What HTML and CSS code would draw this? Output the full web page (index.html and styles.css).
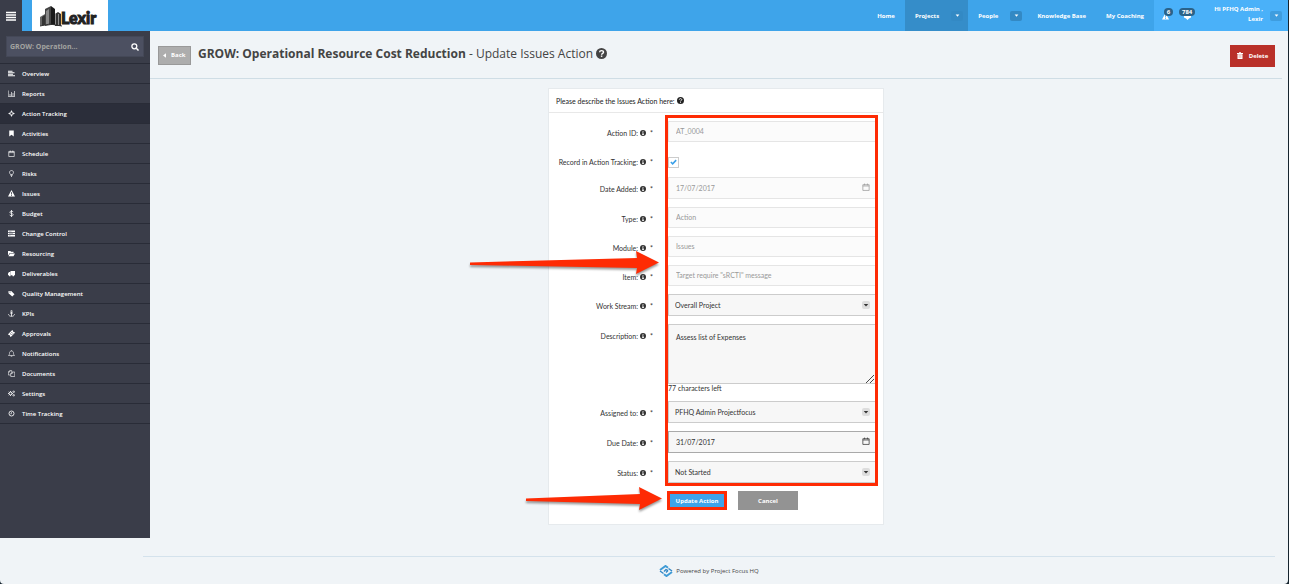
FILE: index.html
```html
<!DOCTYPE html>
<html lang="en">
<head>
<meta charset="utf-8">
<title>Update Issues Action</title>
<link rel="stylesheet" href="styles.css">
</head>
<body>
<svg class="defs" aria-hidden="true">
  <symbol id="info" viewBox="0 0 12 12"><circle cx="6" cy="6" r="6" fill="currentColor"/><path d="M5 2h2v1.7H5zM4.2 4.8H7v3.7h.9V10H4.2V8.500H5V6.200h-.8z" fill="#fff"/></symbol>
  <symbol id="help" viewBox="0 0 12 12"><circle cx="6" cy="6" r="6" fill="currentColor"/><path d="M3.900 4.600C4 3.200 5 2.800 6 2.800s2.200.6 2.200 1.800C8.200 6 6.100 5.900 6.100 7.400" fill="none" stroke="#fff" stroke-width="1.500"/><path d="M5.300 8.200h1.600v1.500H5.300z" fill="#fff"/></symbol>
  <symbol id="cal" viewBox="0 0 14 14"><path d="M1.500 3h11v10h-11zM1.500 5.200h11M4.500 1v3M9.500 1v3" fill="none" stroke="currentColor" stroke-width="1.300"/></symbol>
  <symbol id="caret" viewBox="0 0 8 8"><path d="M1 2.500h6L4 6z" fill="currentColor"/></symbol>
  <symbol id="warn" viewBox="0 0 14 14"><path fill="currentColor" fill-rule="evenodd" d="M7 0l7 13H0zM6 4.500l.3 4h1.400l.3-4zM6 9.500v2h2v-2z"/></symbol>
</svg>
<div class="page">
  <header class="topbar">
    <button class="menu" aria-label="Menu"><svg viewBox="0 0 10 10"><path d="M0 1.500h10M0 4h10M0 6.500h10M0 9h10" stroke="#fff" stroke-width="1.400"/></svg></button>
    <a class="logo" href="#" aria-label="Lexir">
      <svg class="towers" viewBox="0 0 22 21"><path d="M0 11l5-3v11l-5 1z" fill="#666"/><path d="M2 11l3-2v10l-3 .5z" fill="#333"/><path d="M5 3l6-3v19l-6 1z" fill="#444"/><path d="M6 5l3-2v16H6z" fill="#888"/><path d="M11 0l4 3v16h-4z" fill="#1a1a1a"/><path d="M15 8l3-2 3 2v12h-6z" fill="#333"/><path d="M15.500 8v11M18.500 8v11" stroke="#ccc" stroke-width=".6"/><path d="M0 20l10-2 12 2" stroke="#333" fill="none"/></svg>
      <span>Lexir</span>
    </a>
    <nav class="topnav">
      <a href="#">Home</a>
      <a class="current" href="#">Projects <span class="drop"><svg><use href="#caret"/></svg></span></a>
      <a href="#">People <span class="drop"><svg><use href="#caret"/></svg></span></a>
      <a href="#">Knowledge Base</a>
      <a href="#">My Coaching</a>
    </nav>
    <div class="account">
      <a class="alert" href="#" aria-label="Warnings"><svg><use href="#warn"/></svg><span class="badge">6</span></a>
      <a class="alert mail" href="#" aria-label="Messages"><svg viewBox="0 0 14 14"><path d="M0 2h14v7l-4 2-3 3-3-3-4-2z" fill="#fff"/></svg><span class="badge">784</span></a>
      <span class="user">Hi PFHQ Admin ,<br>Lexir</span>
      <button class="drop" aria-label="Account"><svg><use href="#caret"/></svg></button>
    </div>
  </header>
  <div class="body">
    <aside class="sidebar">
      <form class="search">
        <input type="text" placeholder="GROW: Operation..." aria-label="Search projects">
        <svg viewBox="0 0 12 12"><circle cx="5" cy="5" r="3.700" fill="none" stroke="#fff" stroke-width="1.900"/><path d="M8 8l3.300 3.300" stroke="#fff" stroke-width="2.200"/></svg>
      </form>
      <nav class="sidenav">
        <a href="#"><svg viewBox="0 0 14 14"><path d="M0 2.500h9M0 5.500h13M0 8.500h10M0 11.500h14" stroke="currentColor" stroke-width="2"/></svg>Overview</a>
        <a href="#"><svg viewBox="0 0 14 14"><path d="M.5 1v12H14M4 8v4M7 4v8M10 6v6M13 2v10" fill="none" stroke="currentColor" stroke-width="1.300"/></svg>Reports</a>
        <a class="current" href="#"><svg viewBox="0 0 14 14"><circle cx="7" cy="7" r="3.500" fill="none" stroke="currentColor" stroke-width="1.600"/><path d="M7 1v4M7 9v4M1 7h4M9 7h4" stroke="currentColor" stroke-width="1.800"/></svg>Action Tracking</a>
        <a href="#"><svg viewBox="0 0 14 14"><path d="M2.500 1h9v12L7 9.500 2.500 13z" fill="currentColor"/></svg>Activities</a>
        <a href="#"><svg><use href="#cal"/></svg>Schedule</a>
        <a href="#"><svg viewBox="0 0 14 14"><path d="M5 9C4.500 7.500 3 7 3 4.800 3 2.500 5 1 7 1s4 1.500 4 3.800C11 7 9.500 7.500 9 9zM5 11h4M6 13h2" fill="none" stroke="currentColor" stroke-width="1.400"/></svg>Risks</a>
        <a href="#"><svg><use href="#warn"/></svg>Issues</a>
        <a href="#"><svg viewBox="0 0 14 14"><path d="M10.500 4.200C10 3 8.800 2.500 7 2.500c-2 0-3.200.8-3.200 2.200 0 3 6.600 1.500 6.600 4.600 0 1.500-1.400 2.300-3.400 2.300s-3.200-.8-3.600-2M7 0v14" fill="none" stroke="currentColor" stroke-width="1.600"/></svg>Budget</a>
        <a href="#"><svg viewBox="0 0 14 14"><path d="M0 1h14v3H0zM0 5.500h14v3H0zM0 10h14v3H0z" fill="currentColor"/><path d="M2 2.500h5M2 7h8M2 11.500h3" stroke="#777b86"/></svg>Change Control</a>
        <a href="#"><svg viewBox="0 0 14 14"><path d="M0 11V2h5l1 1.500h5V6H3.500zM4 7h10l-3 5.500H1z" fill="currentColor"/></svg>Resourcing</a>
        <a href="#"><svg viewBox="0 0 14 14"><path d="M5 2h9v8.500H5zM0 10.500V7l2-3h2.500v6.500z" fill="currentColor"/><circle cx="3.500" cy="11" r="1.700" fill="currentColor"/><circle cx="10.500" cy="11" r="1.700" fill="currentColor"/></svg>Deliverables</a>
        <a href="#"><svg viewBox="0 0 14 14"><path d="M1 2h5.500l6.500 6.500L8.500 13 1 6.500zM3 3v2h2V3z" fill="currentColor" fill-rule="evenodd"/></svg>Quality Management</a>
        <a href="#"><svg viewBox="0 0 14 14"><circle cx="7" cy="2.300" r="1.500" fill="none" stroke="currentColor" stroke-width="1.400"/><path d="M7 4v8.500M4 6h6M1 8.500c.5 5.500 11.500 5.500 12 0" fill="none" stroke="currentColor" stroke-width="1.600"/></svg>KPIs</a>
        <a href="#"><svg viewBox="0 0 14 14"><path d="M0 8.500L8.500 0l1.500 1.500c0 1.500 1 2.500 2.500 2.500L14 5.500 5.500 14 4 12.500C4 11 3 10 1.500 10z" fill="currentColor"/><path d="M4.500 7.500l3-3 2.500 2.500-3 3z" fill="none" stroke="#3a3d49"/></svg>Approvals</a>
        <a href="#"><svg viewBox="0 0 14 14"><path d="M1 11c2-2 2-3 2-5.500C3 3.500 5 2 7 2s4 1.500 4 3.500C11 8 11 9 13 11zM7 .5V2M5.500 12.500h3" fill="none" stroke="currentColor" stroke-width="1.200"/></svg>Notifications</a>
        <a href="#"><svg viewBox="0 0 14 14"><path d="M5.500 10H.7V4L3.500 1.200h4V4M5.500 13V7l3-3h5v9zM8.500 4v3h-3M3.500 1.200V4H.7" fill="none" stroke="currentColor" stroke-width="1.200"/></svg>Documents</a>
        <a href="#"><svg viewBox="0 0 14 14"><circle cx="5" cy="7" r="2.900" fill="none" stroke="currentColor" stroke-width="2"/><path d="M5 2v2M5 10v2M0 7h2M8 7h2M1.500 3.500l1.400 1.400M8.500 10.500L7.100 9.100M1.500 10.500l1.400-1.400M8.500 3.500L7.100 4.900" stroke="currentColor" stroke-width="1.500"/><circle cx="11.500" cy="3.500" r="1.500" fill="none" stroke="currentColor" stroke-width="1.500"/><circle cx="11.500" cy="10.500" r="1.500" fill="none" stroke="currentColor" stroke-width="1.500"/></svg>Settings</a>
        <a href="#"><svg viewBox="0 0 14 14"><circle cx="7" cy="7" r="5" fill="none" stroke="currentColor" stroke-width="1.700"/><path d="M7 4v3.500H4.500" fill="none" stroke="currentColor" stroke-width="1.200"/></svg>Time Tracking</a>
      </nav>
    </aside>
    <main class="main">
      <div class="heading">
        <button class="back"><svg viewBox="0 0 4 6"><path d="M4 0v6L0 3z" fill="#fff"/></svg>Back</button>
        <h1><strong>GROW: Operational Resource Cost Reduction</strong> - Update Issues Action <svg><use href="#help"/></svg></h1>
        <button class="delete"><svg viewBox="0 0 12 14"><path d="M0 2h4V.5h4V2h4v1.800H0zM1 4.500h10V14H1z" fill="#fff"/><path d="M4 6v6M6 6v6M8 6v6" stroke="#b93029" stroke-width=".5"/></svg>Delete</button>
      </div>
      <section class="card">
        <h2>Please describe the Issues Action here: <svg><use href="#help"/></svg></h2>
        <form class="fields">
          <div class="row"><label for="aid">Action ID: <svg><use href="#info"/></svg><i>*</i></label><input class="field locked" id="aid" value="AT_0004" readonly></div>
          <div class="row check"><label for="rec">Record in Action Tracking: <svg><use href="#info"/></svg><i>*</i></label><div class="control"><input type="checkbox" id="rec" checked><svg class="tick" viewBox="0 0 10 8"><path d="M1.200 4l2.600 2.600L8.800 1.300" fill="none" stroke="#3a9fe8" stroke-width="2.200"/></svg></div></div>
          <div class="row"><label for="added">Date Added: <svg><use href="#info"/></svg><i>*</i></label><div class="control"><input class="field locked date" id="added" value="17/07/2017" readonly><svg class="day faded"><use href="#cal"/></svg></div></div>
          <div class="row"><label for="type">Type: <svg><use href="#info"/></svg><i>*</i></label><input class="field locked" id="type" value="Action" readonly></div>
          <div class="row"><label for="module">Module: <svg><use href="#info"/></svg><i>*</i></label><input class="field locked" id="module" value="Issues" readonly></div>
          <div class="row"><label for="item">Item: <svg><use href="#info"/></svg><i>*</i></label><input class="field locked" id="item" value="Target require &quot;sRCTI&quot; message" readonly></div>
          <div class="row"><label for="stream">Work Stream: <svg><use href="#info"/></svg><i>*</i></label><div class="control"><select class="field" id="stream"><option>Overall Project</option></select><span class="arrow"><svg><use href="#caret"/></svg></span></div></div>
          <div class="row"><label for="desc">Description: <svg><use href="#info"/></svg><i>*</i></label><div class="control"><textarea class="field" id="desc">Assess list of Expenses</textarea><svg class="grip" viewBox="0 0 8 8"><path d="M0 8L8 0M4 8l4-4" stroke="#333" stroke-width=".9"/></svg><p>77 characters left</p></div></div>
          <div class="row"><label for="who">Assigned to: <svg><use href="#info"/></svg><i>*</i></label><div class="control"><select class="field" id="who"><option>PFHQ Admin Projectfocus</option></select><span class="arrow"><svg><use href="#caret"/></svg></span></div></div>
          <div class="row"><label for="due">Due Date: <svg><use href="#info"/></svg><i>*</i></label><div class="control"><input class="field date due" id="due" value="31/07/2017"><svg class="day"><use href="#cal"/></svg></div></div>
          <div class="row"><label for="status">Status: <svg><use href="#info"/></svg><i>*</i></label><div class="control"><select class="field" id="status"><option>Not Started</option></select><span class="arrow"><svg><use href="#caret"/></svg></span></div></div>
          <div class="actions"><button type="button" class="update">Update Action</button><button type="button" class="cancel">Cancel</button></div>
          <div class="outline"></div>
          <svg class="pointer first" viewBox="0 0 190 24"><path d="M0 11.500L167 7 166 0l23 11.500L166 23l1-6L0 14z" fill="#fe2b04"/></svg>
          <svg class="pointer second" viewBox="0 0 136 24"><path d="M0 11.500L114 7 113 0l23 11.500L113 23l1-6L0 14z" fill="#fe2b04"/></svg>
        </form>
      </section>
    </main>
  </div>
  <footer class="footer">
    <svg viewBox="0 0 14 12"><path d="M1 5L6.500 1 9 2.800M13 7L7.500 11 5 9.200" fill="none" stroke="#3f9bd6" stroke-width="2"/><path d="M9.500 3.500L13 6M4.500 8.500L1 6M5 6.500L7 4.600l2 1M9 5.600L7 7.500" fill="none" stroke="#2f86c6" stroke-width="1.400"/></svg>
    <a href="#">Powered by Project Focus HQ</a>
  </footer>
</div>
</body>
</html>
```
FILE: styles.css
```css
* { box-sizing: border-box; }
html { background: #16242e; }
body { margin: 0; font: 6px/8px "Open Sans", sans-serif; color: #333; }
a { color: inherit; text-decoration: none; }
button, input, select, textarea { font: inherit; margin: 0; border: 0; border-radius: 0; outline: 0; }
button { padding: 0; color: #fff; cursor: pointer; }
h1, h2, p { margin: 0; font-weight: 400; }
svg { display: block; flex: none; }
.defs { position: absolute; width: 0; height: 0; }

.page { min-height: 100vh; margin-right: 1px; display: flex; flex-direction: column; background: #f0f4f7; border-radius: 0 0 4px 4px; }

.topbar { display: flex; height: 31px; background: #3ea4ea; color: #fff; font-weight: 700; }
.menu { width: 22px; background: #3a3d49; display: grid; place-items: center; }
.menu svg { width: 10px; height: 10px; }
.logo { width: 76px; margin-left: 10px; padding: 0 7px 4px 8px; background: #fff; display: flex; align-items: flex-end; color: #222; font: 900 16px/18px Lato, sans-serif; -webkit-text-stroke: 1px #222; }
.logo span { margin-left: -1px; }
.towers { width: 22px; height: 21px; }
.topnav { margin-left: auto; display: flex; }
.topnav a { display: flex; align-items: center; padding: 0 10px; gap: 12px; }
.topnav .current { background: #358dc9; }
.drop { width: 12px; height: 10px; border-radius: 2px; background: #3389c4; display: grid; place-items: center; color: #fff; }
.topnav .drop { margin-right: -5px; }
.drop svg { width: 5px; height: 5px; }
.account { width: 134px; padding: 0 6px 0 8px; background: #4ab1f9; display: flex; align-items: center; }
.alert { position: relative; width: 7px; height: 7px; margin-top: 2px; }
.alert svg { width: 7px; height: 7px; }
.mail { margin-left: 15px; }
.badge { position: absolute; left: 2px; bottom: 4px; padding: 0 2px; border-radius: 4px; background: #2b6288; min-width: 9px; text-align: center; }
.mail .badge { left: -5px; padding: 0 3px; }
.user { margin-left: auto; text-align: right; padding-bottom: 4px; line-height: 10px; }
.account .drop { margin-left: 7px; background: #3e9ddf; }

.body { display: flex; flex: 1; min-height: 507px; }
.sidebar { width: 150px; background: #3a3d49; color: #fff; }
.search { position: relative; margin: 5px 6px 6px; }
.search input { display: block; width: 100%; height: 21px; padding: 0 30px 0 3px; background: #4c5061; border: 1px solid #444857; color: #fff; font-size: 7px; font-weight: 700; }
.search input::placeholder { color: #a3a3a0; }
.search svg { position: absolute; right: 5px; top: 7px; width: 8px; height: 8px; }
.sidenav { border-top: 1px solid #292c37; }
.sidenav a { display: flex; align-items: center; height: 20px; padding: 0 8px; gap: 7px; border-bottom: 1px solid #292c37; font-weight: 600; }
.sidenav svg { width: 7px; height: 7px; }
.sidenav .current { background: #2b2e3a; }

.main { flex: 1; display: flex; flex-direction: column; padding-right: 6px; }
.heading { display: flex; align-items: center; height: 48px; padding: 0 7px 0 8px; border-bottom: 1px solid #cfdde5; }
.back { display: flex; align-items: center; gap: 5px; width: 33px; height: 19px; margin-top: 1px; padding: 0 4px; background: #adadad; border: 1px solid #999; font-weight: 700; }
.back svg { width: 3px; height: 5px; }
h1 { margin-left: 7px; padding-bottom: 2px; display: flex; align-items: center; font-size: 12px; line-height: 18px; white-space: pre; color: #444; }
h1 svg { width: 11px; height: 11px; }
.delete { display: flex; align-items: center; justify-content: center; gap: 6px; width: 45px; height: 22px; margin: 2px 0 0 auto; background: #b93029; font-weight: 700; }
.delete svg { width: 6px; height: 7px; }

.card { width: 336px; margin: 9px auto 13px; background: #fff; border: 1px solid #e6eaed; font-family: Lato, "Open Sans", sans-serif; font-size: 7px; }
h2 { display: flex; align-items: center; gap: 2px; height: 24px; padding: 0 7px; border-bottom: 1px solid #e8e8e8; font-size: 7px; color: #222; }
h2 svg { width: 7px; height: 7px; }
.fields { position: relative; padding: 8px 7px 14px; display: flex; flex-direction: column; gap: 8px; }
.row { display: grid; grid-template-columns: 97px 208px; gap: 15px; }
label { display: flex; justify-content: flex-end; align-items: center; height: 24px; white-space: nowrap; margin-bottom: -3px; }
label svg { width: 6px; height: 6px; margin: 0 4px 0 2px; }
label i { font-style: normal; width: 3px; }
.control { position: relative; }
.field { display: block; width: 100%; height: 22px; padding: 0 7px 1px; background: #f7f7f7; border: 1px solid #ccc; color: #333; appearance: none; }
select.field { padding-left: 6px; }
.locked { height: 21px; background: #fbfbfb; border-color: #e5e5e5; color: #999; }
.date { height: 22px; }
.due { border-color: #aaa; }
textarea.field { height: 60px; padding: 8px 7px; resize: none; }
.control p { line-height: 9px; }
.check { height: 20px; margin-bottom: -1px; }
.check input { display: block; appearance: none; width: 11px; height: 11px; margin-top: 7px; background: #fff; border: 1px solid #ccc; }
.tick { position: absolute; left: 2px; top: 9px; width: 7px; height: 6px; pointer-events: none; }
.day { position: absolute; right: 6px; top: 6px; width: 8px; height: 8px; }
.faded { color: #999; }
.arrow { position: absolute; right: 6px; top: 7px; width: 8px; height: 8px; border-radius: 2px; background: #ddd; display: grid; place-items: center; pointer-events: none; }
.arrow svg { width: 6px; height: 6px; }
.grip { position: absolute; right: 2px; top: 51px; width: 8px; height: 8px; }
.actions { display: flex; gap: 11px; padding-left: 111px; font: 700 6px/8px "Open Sans", sans-serif; }
.actions button { height: 19px; width: 60px; }
.actions .update { background: #3ea4ea; outline: 3px solid #fe2b04; outline-offset: -3px; }
.cancel { background: #939393; }
.outline { position: absolute; left: 116px; top: 2px; width: 213px; height: 371px; border: 3px solid #fe2b04; pointer-events: none; }
.pointer { position: absolute; height: 24px; filter: drop-shadow(0 2px 1px #0006); overflow: visible; pointer-events: none; }
.first { width: 190px; left: -79px; top: 138px; }
.second { width: 136px; left: -23px; top: 374px; }

.footer { display: flex; justify-content: center; align-items: center; gap: 3px; height: 28px; margin: 18px 13px 0 143px; border-top: 1px solid #d4e2ec; color: #444; }
.footer svg { width: 14px; height: 12px; }
```
